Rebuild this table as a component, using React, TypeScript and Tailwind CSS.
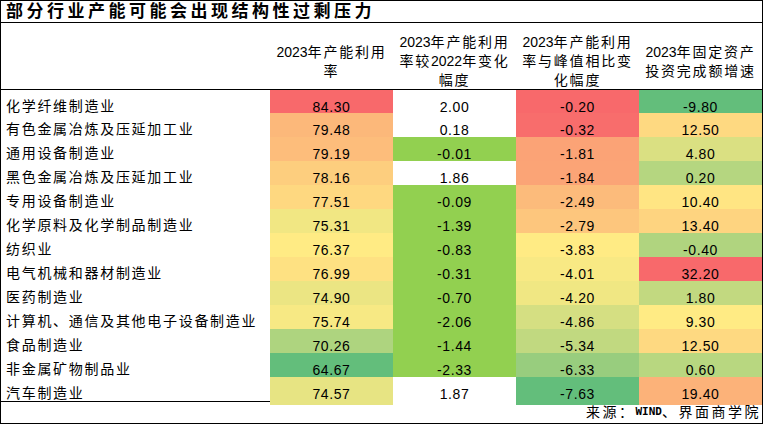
import React from "react";

type Row = [string, number, number, number, number];

const rows: Row[] = [
  ["化学纤维制造业", 84.3, 2.0, -0.2, -9.8],
  ["有色金属冶炼及压延加工业", 79.48, 0.18, -0.32, 12.5],
  ["通用设备制造业", 79.19, -0.01, -1.81, 4.8],
  ["黑色金属冶炼及压延加工业", 78.16, 1.86, -1.84, 0.2],
  ["专用设备制造业", 77.51, -0.09, -2.49, 10.4],
  ["化学原料及化学制品制造业", 75.31, -1.39, -2.79, 13.4],
  ["纺织业", 76.37, -0.83, -3.83, -0.4],
  ["电气机械和器材制造业", 76.99, -0.31, -4.01, 32.2],
  ["医药制造业", 74.9, -0.7, -4.2, 1.8],
  ["计算机、通信及其他电子设备制造业", 75.74, -2.06, -4.86, 9.3],
  ["食品制造业", 70.26, -1.44, -5.34, 12.5],
  ["非金属矿物制品业", 64.67, -2.33, -6.33, 0.6],
  ["汽车制造业", 74.57, 1.87, -7.63, 19.4],
];

const headers = [
  ["2023年产能利用", "率"],
  ["2023年产能利用", "率较2022年变化", "幅度"],
  ["2023年产能利用", "率与峰值相比变", "化幅度"],
  ["2023年固定资产", "投资完成额增速"],
];

// excel style 3-colour scale: green (min) -> yellow (median) -> red (max)
const RED = [248, 105, 107];
const YELLOW = [255, 235, 132];
const GREEN = [99, 190, 123];

function mix(a: number[], b: number[], t: number) {
  const c = a.map((v, i) => Math.round(v + (b[i] - v) * t));
  return `rgb(${c[0]}, ${c[1]}, ${c[2]})`;
}

function scaleFor(values: number[]) {
  const sorted = [...values].sort((a, b) => a - b);
  const min = sorted[0];
  const max = sorted[sorted.length - 1];
  const mid = sorted[Math.floor(sorted.length / 2)];
  return (v: number) =>
    v >= mid
      ? mix(YELLOW, RED, (v - mid) / (max - mid))
      : mix(YELLOW, GREEN, (mid - v) / (mid - min));
}

const scales = [1, 3, 4].map((col) => scaleFor(rows.map((r) => r[col] as number)));

function cellColor(col: number, v: number) {
  if (col === 1) return scales[0](v);
  if (col === 2) return v < 0 ? "#92d050" : "#ffffff";
  if (col === 3) return scales[1](v);
  return scales[2](v);
}

// letter-spacing only on the chinese runs, digits stay tight
function Mixed({ text }: { text: string }) {
  const parts = text.split(/([\x00-\xff]+)/).filter(Boolean);
  return (
    <>
      {parts.map((p, i) =>
        /^[\x00-\xff]+$/.test(p) ? (
          <span key={i}>{p}</span>
        ) : (
          <span key={i} className="tracking-[1.8px]">
            {p}
          </span>
        ),
      )}
    </>
  );
}

export default function App() {
  return (
    <div className="w-[764px] h-[425px] bg-white">
      <div className="w-[763px] h-[424px] border border-black flex flex-col text-black font-['Liberation_Sans','Noto_Sans_CJK_SC',sans-serif]">
        <div className="h-[25px] border-b border-black flex items-center pl-[5px] text-[17px] font-bold tracking-[3.5px] leading-none">
          部分行业产能可能会出现结构性过剩压力
        </div>

        <div className="h-[67px] border-b border-black grid grid-cols-[269px_repeat(4,123px)]">
          <div />
          {headers.map((lines, i) => (
            <div
              key={i}
              className="flex flex-col items-center justify-center pt-[10px] text-[14px] leading-[19px]"
            >
              {lines.map((l) => (
                <div key={l}>
                  <Mixed text={l} />
                </div>
              ))}
            </div>
          ))}
        </div>

        <div className="h-[312px] border-b border-black flex flex-col">
          {rows.map((r, ri) => (
            <div
              key={r[0]}
              className={`grid grid-cols-[269px_repeat(4,123px)] ${ri === 0 ? "h-[23px]" : "h-[24px]"}`}
            >
              <div className="flex items-center pl-[5px] pt-[5px] text-[14px] tracking-[1.7px] whitespace-nowrap">
                {r[0]}
              </div>
              {[1, 2, 3, 4].map((c) => {
                const v = r[c] as number;
                return (
                  <div
                    key={c}
                    className="flex items-center justify-center pt-[7px] text-[14px] tracking-[0.6px]"
                    style={{ backgroundColor: cellColor(c, v) }}
                  >
                    {v.toFixed(2)}
                  </div>
                );
              })}
            </div>
          ))}
        </div>

        <div className="flex-1 flex items-center justify-end pr-[1px] text-[14px]">
          <span className="tracking-[2.5px]">来源：</span>
          <span className="font-bold text-[11px] font-['DejaVu_Sans_Mono',monospace]">WIND</span>
          <span className="tracking-[2.5px]">、界面商学院</span>
        </div>
      </div>
    </div>
  );
}
